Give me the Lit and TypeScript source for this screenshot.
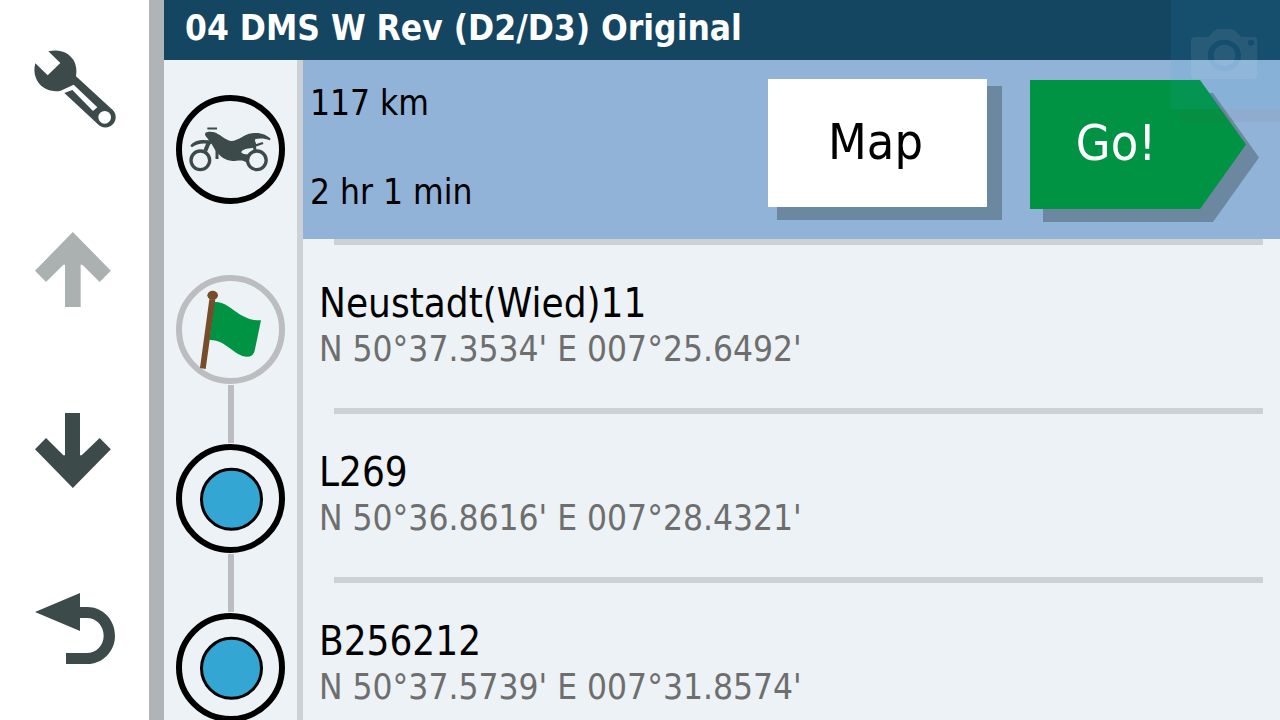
import { LitElement, html, css, svg } from "lit";
import { customElement, property } from "lit/decorators.js";

interface Stop {
  name: string;
  position: string;
  kind: "start" | "via";
}

const STOPS: Stop[] = [
  { name: "Neustadt(Wied)11", position: "N 50°37.3534' E 007°25.6492'", kind: "start" },
  { name: "L269", position: "N 50°36.8616' E 007°28.4321'", kind: "via" },
  { name: "B256212", position: "N 50°37.5739' E 007°31.8574'", kind: "via" },
];

const wrench = svg`
  <path fill="currentColor" d="M145 64 C178 56 206 66 221 91 C229 105 231 122 228 139 L334 236
    A31 31 0 1 1 293 282 L193 189 L217 180 L279 243 L292 232 L221 164 L182 182
    C148 189 119 172 108 145 C102 130 102 115 106 100 L143 136 L181 99 Z"/>
  <circle cx="314" cy="262" r="19" fill="#fff"/>`;

const arrowUp = svg`
  <path fill="currentColor" d="M218.500 66 L332.500 182 L299 216 L247 164 H242 V291 H195 V164 H190 L138 216 L105 182 Z"/>`;

const arrowDown = svg`
  <path fill="currentColor" d="M218.500 834 L332.500 718 L299 684 L245 736 H240 V609 H195 V736 H190 L138 684 L105 718 Z"/>`;

const arrowBack = svg`
  <path fill="currentColor" d="M105 126 L240 69 V111 H262 C308 111 345 149 345 197 C345 244 308 282 262 282 H198 V249 H260
    C289 249 311 226 311 197 C311 167 289 144 260 144 H240 V183 Z"/>`;

const camera = svg`
  <path fill="#fff" fill-opacity=".08" fill-rule="evenodd" d="M555 111 H595 L612 93 Q619 87 626 87 H661 Q668 87 676 93 L694 111 H730 Q742 111 742 123 V225
    Q742 237 730 237 H555 Q543 237 543 225 V123 Q543 111 555 111 Z
    M593 166 A50 47 0 1 0 693 166 A50 47 0 1 0 593 166 Z
    M713 128 A10 9 0 1 0 733 128 A10 9 0 1 0 713 128 Z"/>
  <ellipse cx="643.500" cy="166" rx="33" ry="32" fill="#fff" fill-opacity=".08"/>`;

@customElement("stop-badge")
export class StopBadge extends LitElement {
  @property() kind: "vehicle" | "start" | "via" = "via";

  static styles = css`
    :host {
      display: block;
      width: 109px;
      height: 109px;
    }
    .art {
      display: block;
      width: 100%;
      height: 100%;
    }
  `;

  private vehicle() {
    return svg`
      <g fill="none" stroke="#3c4a4a">
        <circle cx="106" cy="226" r="28" stroke-width="10"/>
        <circle cx="275.500" cy="226" r="28" stroke-width="10"/>
        <path stroke-width="6" d="M127 130.500 H156"/>
        <path stroke-width="12" d="M133 168 L121 197"/>
        <path stroke-width="9" d="M156 192 V222"/>
        <path stroke-width="7" d="M262 185 L294 174"/>
        <path stroke-width="9" d="M267 172 L270 198"/>
      </g>
      <path fill="#3c4a4a" d="M76 182 C88 166 112 162 140 168 L138 178 C116 172 94 176 81 187 Z"/>
      <path fill="#3c4a4a" d="M120 147 C122 139 139 140 148 142 C167 149 181 166 198 168 C219 169 237 148 261 145
        C284 141 304 149 317 161 L314 166 C301 160 286 159 271 162 C268 170 274 177 275 182 L262 189
        C247 190 229 194 229 202 C231 208 242 207 252 210 L244 232 C229 223 220 228 202 228
        C180 227 166 214 156 202 C145 190 143 177 134 171 C130 159 120 155 120 147 Z"/>`;
  }

  private flag() {
    return svg`
      <path fill="#009343" d="M148 126 C193 121 222 184 288 181 L269 272 Q265 290 246 290 C208 289 181 237 133 240 Z"/>
      <path fill="#764c29" d="M133 118 H151 L122 327 L105 324 Z"/>
      <ellipse cx="143" cy="106" rx="16" ry="13.500" fill="#764c29"/>`;
  }

  render() {
    const inner =
      this.kind === "vehicle"
        ? this.vehicle()
        : this.kind === "start"
          ? this.flag()
          : svg`<circle cx="199.500" cy="208" r="90" fill="#34a6d3" stroke="#000" stroke-width="9"/>`;
    const top = { vehicle: 30, start: 45, via: 42 }[this.kind];
    return html`<svg class="art" viewBox="33 ${top} 327 327" aria-hidden="true">
      <circle cx="196.500" cy=${top + 163.5} r="154.500" fill="none"
        stroke=${this.kind === "start" ? "#bbbdc0" : "#000"} stroke-width="18"/>
      ${inner}
    </svg>`;
  }
}

@customElement("app-root")
export class AppRoot extends LitElement {
  static styles = css`
    :host {
      display: flex;
      position: relative;
      height: 100vh;
      overflow: hidden;
      background: #ecf2f5;
      color: #000;
      font-family: "DejaVu Sans Condensed", "DejaVu Sans", sans-serif;
      font-size: 35px;
      line-height: 44px;
    }
    * {
      box-sizing: border-box;
    }
    button {
      border: 0;
      margin: 0;
      padding: 0;
      font: inherit;
      cursor: pointer;
    }
    .tools {
      flex: none;
      display: flex;
      flex-direction: column;
      width: 164px;
      background: #fff;
      border-right: 15px solid #b0b4b7;
    }
    .tool {
      flex: 1;
      display: flex;
      align-items: center;
      padding-left: 35px;
      background: none;
      color: #3c4a4a;
    }
    .tool:disabled {
      color: #abb1b1;
      cursor: default;
    }
    .icon {
      width: 80px;
      height: 80px;
      overflow: visible;
    }
    .main {
      flex: 1;
      min-width: 0;
      display: flex;
      flex-direction: column;
    }
    .title {
      flex: none;
      margin: 0;
      padding: 6px 21px 10px;
      background: #144561;
      color: #fff;
      font-size: 35px;
      font-weight: bold;
      white-space: nowrap;
    }
    .route {
      flex: 1;
      min-height: 0;
      overflow: hidden;
    }
    .row {
      display: flex;
    }
    .rail {
      flex: none;
      display: flex;
      flex-direction: column;
      align-items: center;
      width: 139px;
      border-right: 6px solid #ccd1d4;
    }
    .rail.vehicle {
      padding: 35px 0;
    }
    .stem {
      flex: 1;
      width: 6px;
      margin-bottom: 1px;
      background: #bbbdc0;
    }
    .stem.below {
      margin: 1px 0 0;
    }
    .stem.none {
      background: none;
    }
    .body {
      flex: 1;
      min-width: 0;
    }
    .summary {
      display: flex;
      align-items: flex-start;
      height: 179px;
      padding: 19px 34px 0 7px;
      background: #91b3d7;
    }
    .totals {
      flex: 1;
      display: flex;
      flex-direction: column;
      gap: 45px;
      padding-top: 2px;
    }
    .map,
    .go {
      font-size: 50px;
      line-height: 60px;
    }
    .map {
      width: 219px;
      height: 128px;
      margin-right: 43px;
      padding: 0 4px 2px 0;
      background: #fff;
      color: #000;
      box-shadow: 12px 10px 0 3px #6c87a0;
    }
    .go-shadow {
      padding-top: 1px;
      filter: drop-shadow(13px 13px 0 #6c87a0);
    }
    .go {
      display: block;
      width: 216px;
      height: 129px;
      padding: 0 44px 4px 0;
      background: #009343;
      color: #fff;
      clip-path: polygon(0 0, 170px 0, 100% 50%, 170px 100%, 0 100%);
    }
    .rule {
      height: 6px;
      margin: 0 17px 0 31px;
      border: 0;
      background: #ccd1d4;
    }
    .stops {
      list-style: none;
      margin: 0;
      padding: 0;
    }
    .stop {
      height: 169px;
    }
    .stop .body {
      display: flex;
      flex-direction: column;
    }
    .label {
      flex: 1;
      padding: 35px 16px 0;
      white-space: nowrap;
    }
    .name {
      font-size: 40px;
      line-height: 46px;
    }
    .position {
      line-height: 46px;
      color: #6e6e6e;
    }
    .capture {
      position: absolute;
      top: 0;
      right: 0;
      width: 109px;
      height: 109px;
      background: rgba(52, 166, 211, 0.1);
      box-shadow: 9px 13px 0 rgba(110, 60, 60, 0.05);
    }
    .capture-icon {
      display: block;
      width: 109px;
      height: 109px;
    }
  `;

  private tool(label: string, icon: unknown, box: string, disabled = false) {
    return html`<button class="tool" aria-label=${label} ?disabled=${disabled}>
      <svg class="icon" viewBox=${box} aria-hidden="true">${icon}</svg>
    </button>`;
  }

  render() {
    return html`
      <nav class="tools">
        ${this.tool("Settings", wrench, "105 60 240 240")}
        ${this.tool("Scroll up", arrowUp, "105 60 240 240", true)}
        ${this.tool("Scroll down", arrowDown, "105 600 240 240")}
        ${this.tool("Back", arrowBack, "105 60 240 240")}
      </nav>
      <main class="main">
        <h1 class="title">04 DMS W Rev (D2/D3) Original</h1>
        <div class="route">
          <section class="row">
            <div class="rail vehicle"><stop-badge kind="vehicle"></stop-badge></div>
            <div class="body">
              <div class="summary">
                <div class="totals">
                  <div>117 km</div>
                  <div>2 hr 1 min</div>
                </div>
                <button class="map">Map</button>
                <div class="go-shadow"><button class="go">Go!</button></div>
              </div>
              <hr class="rule" />
            </div>
          </section>
          <ol class="stops">
            ${STOPS.map(
              (stop, i) => html`<li class="row stop">
                <div class="rail">
                  <div class="stem ${i === 0 ? "none" : ""}"></div>
                  <stop-badge kind=${stop.kind}></stop-badge>
                  <div class="stem below"></div>
                </div>
                <div class="body">
                  <div class="label">
                    <div class="name">${stop.name}</div>
                    <div class="position">${stop.position}</div>
                  </div>
                  <hr class="rule" />
                </div>
              </li>`
            )}
          </ol>
        </div>
      </main>
      <button class="capture" aria-label="Take screenshot">
        <svg class="capture-icon" viewBox="483 0 327 327" aria-hidden="true">${camera}</svg>
      </button>
    `;
  }
}
